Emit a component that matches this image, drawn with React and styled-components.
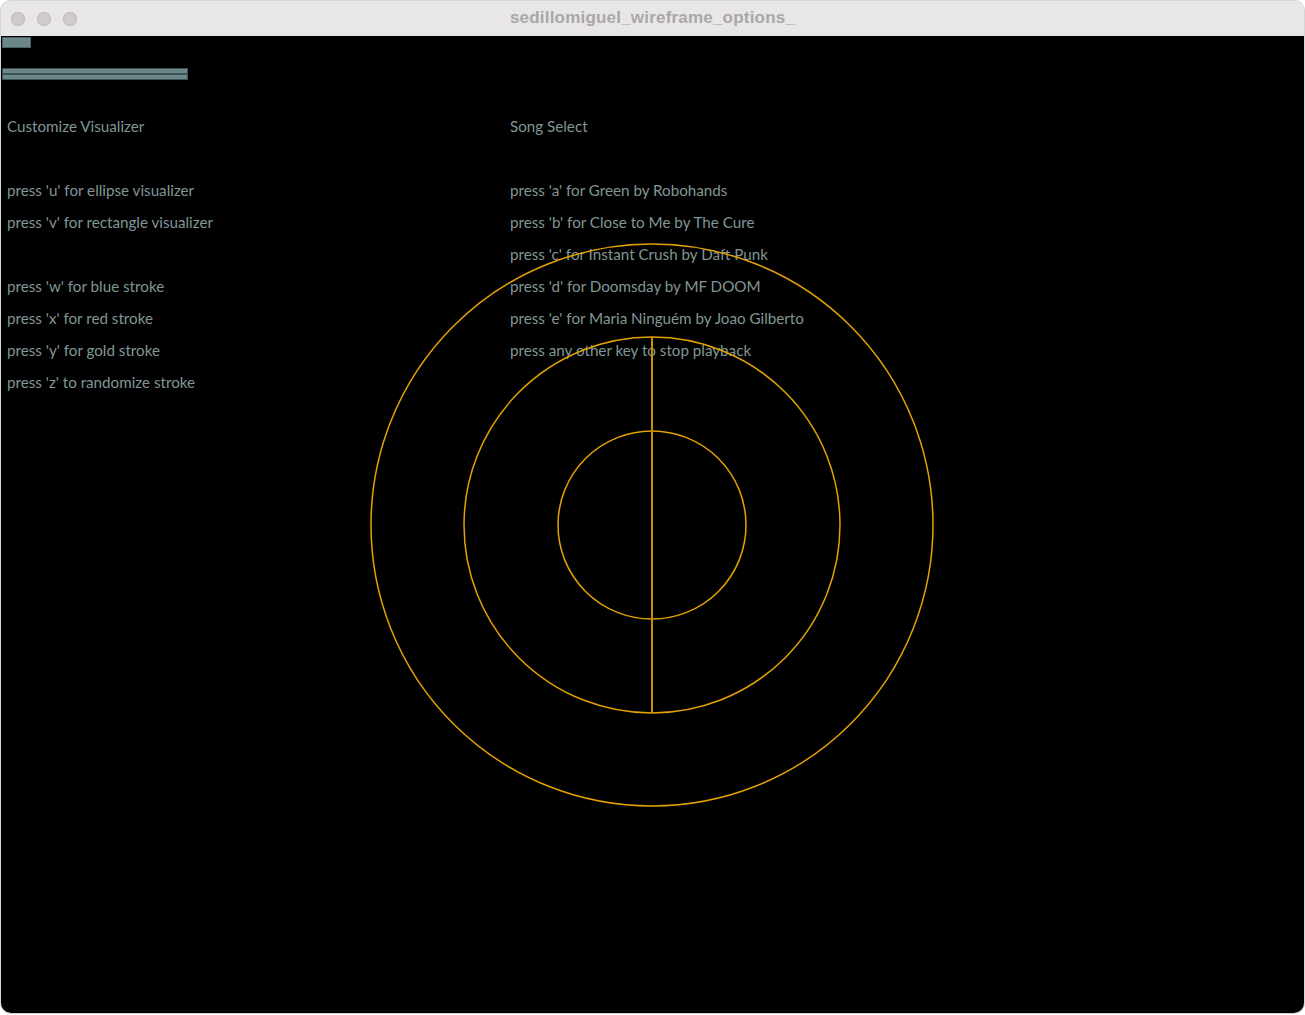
import React from 'react'
import styled, { createGlobalStyle } from 'styled-components'

const GlobalStyle = createGlobalStyle`
  html, body {
    margin: 0;
    padding: 0;
    background: #ffffff;
  }
  body {
    font-family: Lato, "Noto Sans", sans-serif;
  }
`

const Page = styled.div`
  width: 1305px;
  height: 1015px;
  padding: 1px 1px 2px 1px;
  box-sizing: border-box;
`

const Window = styled.div`
  width: 1303px;
  height: 1012px;
  border-radius: 10px;
  overflow: hidden;
  display: flex;
  flex-direction: column;
  box-shadow: 0 0 0 1px #d6d4d5;
`

const TitleBar = styled.div`
  height: 35px;
  flex: none;
  background: #e8e6e7;
  display: flex;
  align-items: center;
  position: relative;
  padding-left: 10px;
  gap: 12px;
`

const Light = styled.span`
  width: 14px;
  height: 14px;
  border-radius: 50%;
  background: #cfcbcc;
  box-shadow: inset 0 0 0 1px #c2bebf;
`

const Title = styled.div`
  position: absolute;
  left: 0;
  right: 0;
  top: 0;
  height: 34px;
  line-height: 34px;
  text-align: center;
  font-family: "Liberation Sans", Arial, sans-serif;
  font-weight: bold;
  font-size: 17px;
  letter-spacing: 0.2px;
  color: #aaa7a8;
  pointer-events: none;
`

const Canvas = styled.div`
  flex: 1;
  background: #000000;
  position: relative;
  display: flex;
  flex-direction: column;
`

const Controls = styled.div`
  height: 74px;
  flex: none;
  padding: 1px 0 0 1px;
  box-sizing: border-box;
  display: flex;
  flex-direction: column;
  align-items: flex-start;
`

const SmallButton = styled.div`
  width: 29px;
  height: 11px;
  background: #6c8789;
  box-shadow: inset 0 0 0 1px #4a6061;
`

const Sliders = styled.div`
  margin-top: 20px;
  display: flex;
  flex-direction: column;
`

const Bar = styled.div`
  width: 186px;
  height: ${p => p.$h}px;
  background: #6c8789;
  box-shadow: inset 0 0 0 1px #3f5354;
`

const Columns = styled.div`
  display: grid;
  grid-template-columns: 503px 1fr;
  padding-left: 6px;
`

const Column = styled.div`
  display: flex;
  flex-direction: column;
`

const Line = styled.div`
  height: 32px;
  line-height: 32px;
  font-size: 15.2px;
  color: #809696;
  white-space: nowrap;
`

const Visual = styled.svg`
  position: absolute;
  left: 0;
  top: 0;
  width: 100%;
  height: 100%;
  pointer-events: none;
`

const left = [
  'Customize Visualizer',
  '',
  "press 'u' for ellipse visualizer",
  "press 'v' for rectangle visualizer",
  '',
  "press 'w' for blue stroke",
  "press 'x' for red stroke",
  "press 'y' for gold stroke",
  "press 'z' to randomize stroke",
]

const right = [
  'Song Select',
  '',
  "press 'a' for Green by Robohands",
  "press 'b' for Close to Me by The Cure",
  "press 'c' for Instant Crush by Daft Punk",
  "press 'd' for Doomsday by MF DOOM",
  "press 'e' for Maria Ninguém by Joao Gilberto",
  'press any other key to stop playback',
]

export default function App() {
  const cx = 651
  const cy = 489
  return (
    <Page>
      <GlobalStyle />
      <Window>
        <TitleBar>
          <Light />
          <Light />
          <Light />
          <Title>sedillomiguel_wireframe_options_</Title>
        </TitleBar>
        <Canvas>
          <Controls>
            <SmallButton />
            <Sliders>
              <Bar $h={6} />
              <Bar $h={6} />
            </Sliders>
          </Controls>
          <Columns>
            <Column>
              {left.map((t, i) => <Line key={i}>{t}</Line>)}
            </Column>
            <Column>
              {right.map((t, i) => <Line key={i}>{t}</Line>)}
            </Column>
          </Columns>
          <Visual>
            <g fill="none" stroke="#e3a200">
              <circle cx={cx} cy={cy} r={281} strokeWidth={1.5} />
              <circle cx={cx} cy={cy} r={188} strokeWidth={1.5} />
              <circle cx={cx} cy={cy} r={94} strokeWidth={1.5} />
              <line x1={cx} y1={cy - 188} x2={cx} y2={cy + 188} strokeWidth={2} stroke="#c98f00" />
            </g>
          </Visual>
        </Canvas>
      </Window>
    </Page>
  )
}
